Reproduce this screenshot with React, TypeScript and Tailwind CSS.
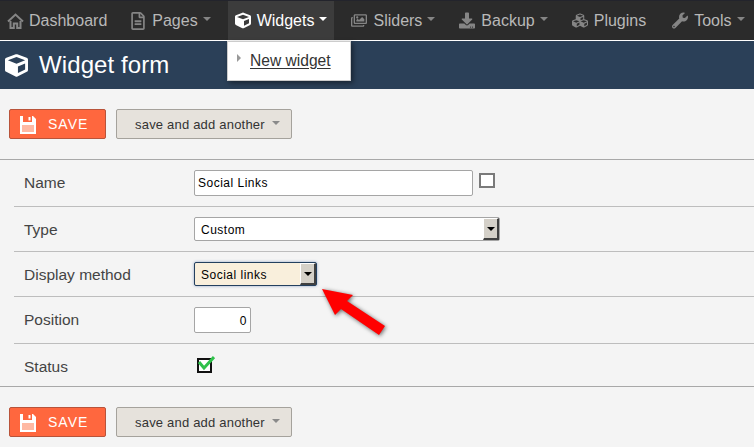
import { FaCube, FaCubes, FaDownload, FaRegFileAlt, FaRegImages, FaWrench } from "react-icons/fa";
import type { ReactNode } from "react";

function Caret({ className }: { className: string }) {
  return <span className={`inline-block w-0 h-0 border-x-[4px] border-x-transparent border-t-[4px] ${className}`} />;
}

function HomeIcon() {
  return (
    <svg width="17" height="16" viewBox="0 0 17 16" className="shrink-0">
      <path d="M1 8.5 L8.5 1.5 L16 8.5" fill="none" stroke="#858585" strokeWidth="2" />
      <path d="M3.5 8 V15 H6.8 V10.5 H10.2 V15 H13.5 V8" fill="none" stroke="#858585" strokeWidth="2" />
    </svg>
  );
}

function SaveIcon() {
  return (
    <svg width="16" height="18" viewBox="0 0 16 18" className="mr-[12px] shrink-0">
      <path d="M0 0 H13 L16 3 V18 H0 Z" fill="#fff" />
      <rect x="3" y="0" width="9" height="6" fill="#ff673e" />
      <rect x="8.5" y="1" width="2" height="3.5" fill="#fff" />
      <rect x="2" y="9" width="12" height="7" fill="#ffb9a3" />
    </svg>
  );
}

function NavItem({
  icon,
  label,
  caret = true,
  active = false,
  className = "",
}: {
  icon: ReactNode;
  label: string;
  caret?: boolean;
  active?: boolean;
  className?: string;
}) {
  return (
    <div className={`h-[39px] flex items-center pl-[7px] pr-[7px] ${active ? "bg-[#3c3c3c] text-white" : "text-[#b8b8b8]"} ${className}`}>
      <span className={`w-[16px] flex justify-center text-[17px] mr-[6px] ${active ? "text-white" : "text-[#858585]"}`}>{icon}</span>
      <span className="text-[16px] leading-none font-light">{label}</span>
      {caret && <Caret className={`ml-[5px] mb-[3px] ${active ? "border-t-white" : "border-t-[#858585]"}`} />}
    </div>
  );
}

function Buttons() {
  return (
    <div className="flex gap-[10px] pl-[9px]">
      <button className="w-[97px] h-[30px] pt-px flex items-center bg-[#ff673e] border border-[#b8533a] rounded-[2px] text-white text-[14px] tracking-[1px] pl-[10px]">
        <SaveIcon />
        SAVE
      </button>
      <button className="w-[176px] h-[30px] pt-px flex items-center bg-[#e6e2dc] border border-[#a5a29c] rounded-[2px] text-[#333] text-[13px] tracking-[0.2px] pl-[18px]">
        save and add another
        <Caret className="ml-[7px] mb-[3px] border-t-[#8a8a8a]" />
      </button>
    </div>
  );
}

function Row({
  label,
  height,
  children,
  last = false,
  labelClass = "",
}: {
  label: string;
  height: string;
  children: ReactNode;
  last?: boolean;
  labelClass?: string;
}) {
  return (
    <div className={`${height} ml-[14px] pl-[10px] flex items-center ${last ? "" : "border-b border-[#bdbdbd]"}`}>
      <div className={`w-[170px] text-[#444] text-[15.5px] ${labelClass}`}>{label}</div>
      {children}
    </div>
  );
}

function SelectBox({ width, label, focused = false }: { width: string; label: string; focused?: boolean }) {
  return (
    <div
      className={`${width} h-[24px] flex items-center rounded-[2px] border pl-[6px] text-[12px] tracking-[0.5px] text-black ${
        focused ? "bg-[#f9efdc] border-[#24405f] shadow-[0_0_3px_#8fa3c4]" : "bg-white border-[#a5a5a5]"
      }`}
    >
      <span className="flex-1 pt-px">{label}</span>
      <span className="w-[16px] h-[22px] flex items-center justify-center bg-[#d4d0c8] border-r-2 border-b-2 border-[#404040] border-l border-t border-l-white border-t-white">
        <Caret className="border-t-black" />
      </span>
    </div>
  );
}

export default function App() {
  return (
    <div className="relative w-[754px] h-[447px] overflow-hidden bg-[#f4f4f4]" style={{ fontFamily: '"Liberation Sans", Arial, sans-serif' }}>
      <nav className="h-[41px] flex gap-[10px] bg-[#2b2b2b] border-t border-[#23242c] border-b border-b-white">
        <NavItem icon={<HomeIcon />} label="Dashboard" caret={false} className="pr-[6px]" />
        <NavItem icon={<FaRegFileAlt className="text-[18px]" />} label="Pages" className="-ml-px" />
        <NavItem icon={<FaCube />} label="Widgets" active />
        <NavItem icon={<FaRegImages className="text-[19px]" />} label="Sliders" />
        <NavItem icon={<FaDownload />} label="Backup" />
        <NavItem icon={<FaCubes className="text-[19px]" />} label="Plugins" caret={false} />
        <NavItem icon={<FaWrench />} label="Tools" className="ml-[2px]" />
      </nav>
      <header className="h-[48px] bg-[#2b4058] flex items-center pl-[5px] text-white">
        <FaCube className="text-[23px] mr-[11px]" />
        <h1 className="text-[24px] leading-none tracking-[0.1px] mb-px">Widget form</h1>
      </header>

      <div className="pt-[20px] pb-[20px]">
        <Buttons />
      </div>

      <div className="border-y border-[#a8a8a8]">
        <Row label="Name" height="h-[47px]">
          <div className="w-[279px] h-[26px] flex items-center bg-white border border-[#a5a5a5] rounded-[2px] pl-[3px] text-[12px] tracking-[0.5px] text-black">
            Social Links
          </div>
          <span className="ml-[6px] mb-[5px] w-[16px] h-[15px] bg-white border-2 border-[#7a7a7a]" />
        </Row>
        <Row label="Type" height="h-[45px]" labelClass="pt-[2px]">
          <SelectBox width="w-[306px]" label="Custom" />
        </Row>
        <Row label="Display method" height="h-[45px]" labelClass="pt-[2px]">
          <SelectBox width="w-[123px]" label="Social links" focused />
        </Row>
        <Row label="Position" height="h-[47px]">
          <div className="w-[57px] h-[26px] pt-px flex items-center justify-end bg-white border border-[#a5a5a5] rounded-[2px] pr-[3px] text-[12px] tracking-[0.5px] text-black">
            0
          </div>
        </Row>
        <Row label="Status" height="h-[42px]" last labelClass="pt-[3px]">
          <span className="relative ml-[3px] mt-[1px] w-[15px] h-[15px] bg-white border-2 border-[#111]">
            <svg viewBox="0 0 18 16" className="absolute -top-[5px] -right-[5px] w-[18px] h-[16px]">
              <path d="M2 7 L7 13 L17 2" fill="none" stroke="#2fc14a" strokeWidth="3" />
            </svg>
          </span>
        </Row>
      </div>

      <div className="pt-[20px]">
        <Buttons />
      </div>

      <div className="absolute left-[227px] top-[41px] w-[124px] h-[40px] bg-white border border-[#ccc] shadow-[2px_2px_5px_rgba(0,0,0,0.45)] flex items-center">
        <span className="ml-[9px] mr-[9px] mb-[6px] w-0 h-0 border-y-[4px] border-y-transparent border-l-[4px] border-l-[#999]" />
        <span className="text-[15.6px] text-[#333] underline underline-offset-2 mb-px">New widget</span>
      </div>

      <svg className="absolute left-[315px] top-[280px] drop-shadow-[1px_1px_2px_rgba(0,0,0,0.6)]" width="80" height="65" viewBox="315 280 80 65">
        <polygon points="322,289 353,295 347,301 385,326 379,335 341,309 335,315" fill="#ff0000" />
      </svg>
    </div>
  );
}
